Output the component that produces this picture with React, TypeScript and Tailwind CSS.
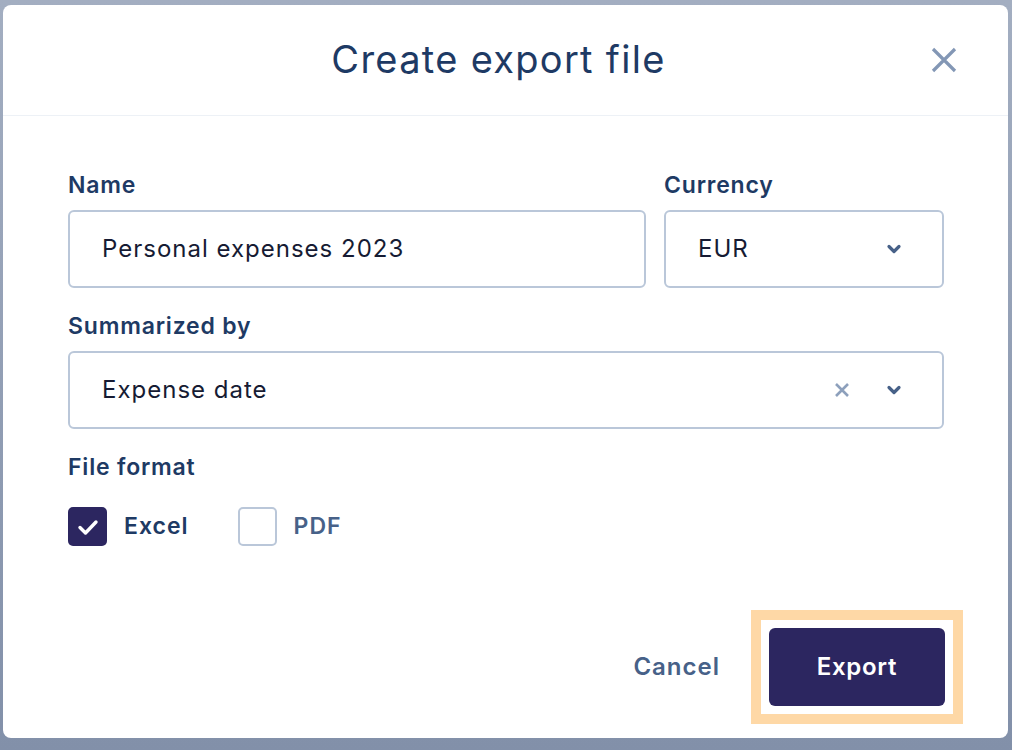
import React from "react";

const font = { fontFamily: "Inter, 'Open Sans', sans-serif" };

const Chevron = () => (
  <svg width="16" height="12" viewBox="0 0 16 12" className="text-[#476188]">
    <path d="M3 3.5 L8 8.5 L13 3.5" fill="none" stroke="currentColor" strokeWidth="3.2" strokeLinecap="round" strokeLinejoin="round" />
  </svg>
);

const SmallX = () => (
  <svg width="16" height="16" viewBox="0 0 16 16" className="text-[#8da0bc]">
    <path d="M2 2 L14 14 M14 2 L2 14" fill="none" stroke="currentColor" strokeWidth="2.6" />
  </svg>
);

const Label = ({ children }: { children: React.ReactNode }) => (
  <div className="text-[23px] font-semibold tracking-[0.8px] text-[#1e3a64] leading-[28px] mb-[11px]">{children}</div>
);

export default function App() {
  return (
    <div
      className="h-[750px] w-[1012px] bg-gradient-to-b from-[#a3aec1] to-[#8290a9] pt-[5px] pl-[3px] pr-[4px] pb-[12px]"
      style={font}
    >
      <div className="h-full bg-white rounded-[8px] flex flex-col">
        {/* header */}
        <div className="h-[111px] border-b border-[#edf1f6] flex items-center justify-center pr-[14px] pb-[2px] relative">
          <h1 className="text-[38px] font-normal tracking-[1.3px] text-[#1e3a64]">Create export file</h1>
          <button className="absolute right-[50px] top-[41px] text-[#8397b5]">
            <svg width="28" height="28" viewBox="0 0 28 28">
              <path d="M3 3 L25 25 M25 3 L3 25" fill="none" stroke="currentColor" strokeWidth="3.2" />
            </svg>
          </button>
        </div>

        {/* body */}
        <div className="pl-[65px] pr-[64px] pt-[55px] flex flex-col flex-1">
          <div className="flex gap-[18px]">
            <div className="w-[578px]">
              <Label>Name</Label>
              <div className="h-[78px] border-2 border-[#bac7d9] rounded-[6px] flex items-center pl-[32px] text-[24px] tracking-[1px] text-[#161b33]">
                Personal expenses 2023
              </div>
            </div>
            <div className="flex-1">
              <Label>Currency</Label>
              <div className="h-[78px] border-2 border-[#bac7d9] rounded-[6px] flex items-center justify-between pl-[32px] pr-[40px] text-[24px] tracking-[1px] text-[#161b33]">
                <span>EUR</span>
                <Chevron />
              </div>
            </div>
          </div>

          <div className="mt-[24px]">
            <Label>Summarized by</Label>
            <div className="h-[78px] border-2 border-[#bac7d9] rounded-[6px] flex items-center pl-[32px] pr-[40px] text-[24px] tracking-[1px] text-[#161b33]">
              <span className="flex-1">Expense date</span>
              <SmallX />
              <span className="w-[36px]" />
              <Chevron />
            </div>
          </div>

          <div className="mt-[24px]">
            <Label>File format</Label>
            <div className="flex items-center mt-[26px]">
              <div className="w-[39px] h-[39px] rounded-[5px] bg-[#2c2660] flex items-center justify-center">
                <svg width="24" height="24" viewBox="0 0 24 24">
                  <path d="M4 12.5 L9.5 18 L20 7" fill="none" stroke="white" strokeWidth="3.4" strokeLinecap="round" strokeLinejoin="round" />
                </svg>
              </div>
              <span className="ml-[17px] text-[23px] font-semibold tracking-[1px] text-[#1e3a64]">Excel</span>
              <div className="ml-[49px] w-[39px] h-[39px] rounded-[5px] border-2 border-[#bac7d9]" />
              <span className="ml-[17px] text-[23px] font-semibold tracking-[1px] text-[#476188]">PDF</span>
            </div>
          </div>

          <div className="mt-auto mb-[14px] flex items-center justify-end">
            <button className="text-[24px] font-semibold tracking-[1px] text-[#476188] mr-[31px]">Cancel</button>
            <div className="border-[10px] border-[#fed8a6] p-[8px] -mr-[19px]">
              <button className="h-[78px] w-[176px] rounded-[6px] bg-[#2c2660] text-white text-[24px] font-semibold tracking-[0.7px] flex items-center justify-center">
                Export
              </button>
            </div>
          </div>
        </div>
      </div>
    </div>
  );
}
